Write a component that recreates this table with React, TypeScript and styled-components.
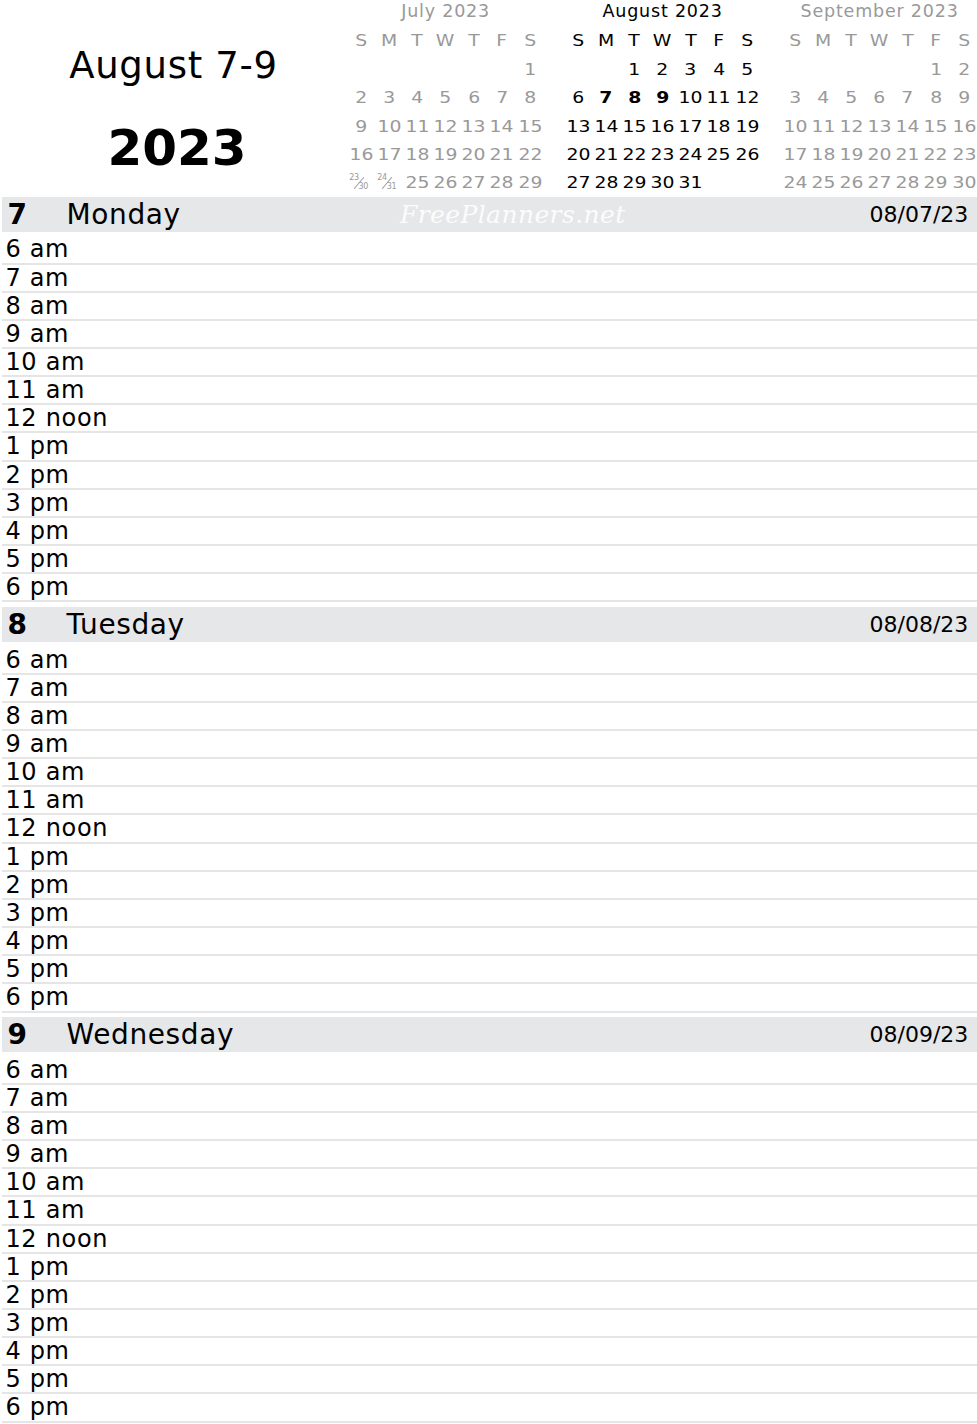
import React from "react";
import styled, { createGlobalStyle } from "styled-components";

const GlobalStyle = createGlobalStyle`
  html, body {
    margin: 0;
    padding: 0;
    background: #fff;
  }
  body {
    font-family: "DejaVu Sans", Verdana, sans-serif;
    color: #000;
  }
`;

const Page = styled.div`
  width: 977px;
  height: 1424px;
  overflow: hidden;
`;

const Top = styled.header`
  display: flex;
  height: 197px;
`;

const TitleBlock = styled.div`
  width: 347px;
  flex: none;
  display: flex;
  flex-direction: column;
  align-items: center;
  padding-top: 44px;
  box-sizing: border-box;
`;

const Range = styled.h1`
  margin: 0;
  font-size: 37px;
  font-weight: normal;
  line-height: 43px;
  letter-spacing: 0.7px;
`;

const Year = styled.div`
  margin: 31.5px 0 0 7px;
  font-size: 50px;
  font-weight: bold;
  line-height: 58px;
`;

const Months = styled.div`
  display: flex;
  gap: 19.8px;
  padding-top: 0.8px;
`;

const Month = styled.div<{ $active?: boolean }>`
  width: 197.2px;
  flex: none;
  display: grid;
  grid-template-columns: repeat(7, 1fr);
  grid-template-rows: 26px repeat(6, 28.4px);
  color: ${(p) => (p.$active ? "#000" : "#999")};
`;

const MonthName = styled.div`
  grid-column: 1 / -1;
  text-align: center;
  font-size: 17.5px;
  line-height: 20px;
  letter-spacing: 0.8px;
`;

const Cell = styled.div<{ $bold?: boolean }>`
  display: flex;
  align-items: center;
  justify-content: center;
  font-size: 16.5px;
  font-weight: ${(p) => (p.$bold ? "bold" : "normal")};
  white-space: nowrap;
`;

const Glyphs = styled.span`
  display: inline-block;
  transform: scaleX(1.14);
`;

const Frac = styled.span`
  position: relative;
  display: inline-flex;
  height: 17px;
  margin-left: -5px;
  font-size: 8px;
  line-height: 8px;
  letter-spacing: -0.4px;

  &::before {
    content: "";
    position: absolute;
    left: 50%;
    top: 50%;
    width: 15px;
    height: 1px;
    background: currentColor;
    transform: translate(-50%, -50%) rotate(-50deg);
  }
`;

const FracTop = styled.span`
  align-self: flex-start;
`;

const FracBottom = styled.span`
  align-self: flex-end;
`;

const Days = styled.main`
  margin-left: 2px;
`;

const Day = styled.section`
  margin-bottom: 4.7px;
`;

const DayHead = styled.div`
  position: relative;
  height: 35px;
  display: flex;
  align-items: center;
  padding: 0 8.7px 0 5.6px;
  background: #e6e7e8;
`;

const DayNum = styled.span`
  width: 59px;
  flex: none;
  font-size: 28px;
  font-weight: bold;
`;

const DayName = styled.span`
  flex: 1;
  font-size: 28px;
  letter-spacing: 0.6px;
`;

const DayDate = styled.span`
  font-size: 22px;
`;

const Watermark = styled.span`
  position: absolute;
  left: 398px;
  top: 1px;
  font-family: "DejaVu Serif", "Liberation Serif", serif;
  font-style: italic;
  font-size: 25px;
  line-height: 33px;
  letter-spacing: 0.4px;
  color: rgba(255, 255, 255, 0.9);
`;

const Slots = styled.div`
  padding-top: 4.4px;
`;

const Slot = styled.div`
  height: 28.17px;
  box-sizing: border-box;
  border-bottom: 2px solid #e5e5e5;
  padding-left: 3.4px;
  font-size: 24px;
  line-height: 27px;
  letter-spacing: 0.7px;
`;

type Entry = number | [number, number] | null;

const weekdays = ["S", "M", "T", "W", "T", "F", "S"];

const months: { name: string; active?: boolean; weeks: Entry[][] }[] = [
  {
    name: "July 2023",
    weeks: [
      [null, null, null, null, null, null, 1],
      [2, 3, 4, 5, 6, 7, 8],
      [9, 10, 11, 12, 13, 14, 15],
      [16, 17, 18, 19, 20, 21, 22],
      [[23, 30], [24, 31], 25, 26, 27, 28, 29],
    ],
  },
  {
    name: "August 2023",
    active: true,
    weeks: [
      [null, null, 1, 2, 3, 4, 5],
      [6, 7, 8, 9, 10, 11, 12],
      [13, 14, 15, 16, 17, 18, 19],
      [20, 21, 22, 23, 24, 25, 26],
      [27, 28, 29, 30, 31, null, null],
    ],
  },
  {
    name: "September 2023",
    weeks: [
      [null, null, null, null, null, 1, 2],
      [3, 4, 5, 6, 7, 8, 9],
      [10, 11, 12, 13, 14, 15, 16],
      [17, 18, 19, 20, 21, 22, 23],
      [24, 25, 26, 27, 28, 29, 30],
    ],
  },
];

const hours = [
  "6 am", "7 am", "8 am", "9 am", "10 am", "11 am", "12 noon",
  "1 pm", "2 pm", "3 pm", "4 pm", "5 pm", "6 pm",
];

const days = [
  { num: 7, name: "Monday", date: "08/07/23" },
  { num: 8, name: "Tuesday", date: "08/08/23" },
  { num: 9, name: "Wednesday", date: "08/09/23" },
];

function MiniMonth({ name, active, weeks }: { name: string; active?: boolean; weeks: Entry[][] }) {
  return (
    <Month $active={active}>
      <MonthName>{name}</MonthName>
      {weekdays.map((w, i) => (
        <Cell key={"w" + i}>
          <Glyphs>{w}</Glyphs>
        </Cell>
      ))}
      {weeks.flat().map((d, i) => (
        <Cell key={i} $bold={active && typeof d === "number" && d >= 7 && d <= 9}>
          {d === null ? null : Array.isArray(d) ? (
            <Frac>
              <FracTop>{d[0]}</FracTop>
              <FracBottom>{d[1]}</FracBottom>
            </Frac>
          ) : (
            <Glyphs>{d}</Glyphs>
          )}
        </Cell>
      ))}
    </Month>
  );
}

export default function App() {
  return (
    <Page>
      <GlobalStyle />
      <Top>
        <TitleBlock>
          <Range>August 7-9</Range>
          <Year>2023</Year>
        </TitleBlock>
        <Months>
          {months.map((m) => (
            <MiniMonth key={m.name} {...m} />
          ))}
        </Months>
      </Top>
      <Days>
        {days.map((d, i) => (
          <Day key={d.num}>
            <DayHead>
              <DayNum>{d.num}</DayNum>
              <DayName>{d.name}</DayName>
              <DayDate>{d.date}</DayDate>
              {i === 0 && <Watermark>FreePlanners.net</Watermark>}
            </DayHead>
            <Slots>
              {hours.map((h) => (
                <Slot key={h}>{h}</Slot>
              ))}
            </Slots>
          </Day>
        ))}
      </Days>
    </Page>
  );
}
